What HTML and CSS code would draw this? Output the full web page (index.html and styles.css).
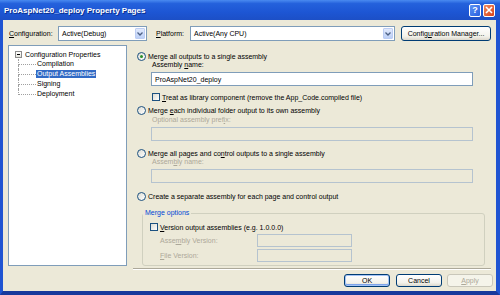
FILE: index.html
```html
<!DOCTYPE html>
<html lang="en">

<head>
  <meta charset="UTF-8">
  <title>ProAspNet20_deploy Property Pages</title>
  <link rel="stylesheet" href="styles.css">
</head>

<body>
  <div class="window">
    <div class="titlebar">
      <span class="title">ProAspNet20_deploy Property Pages</span>
      <div class="caption-btns">
        <span class="cap-btn help">?</span>
        <span class="cap-btn close">
          <svg width="8" height="8" viewBox="0 0 8 8">
            <path d="M1 1 L7 7 M7 1 L1 7" stroke="#fff" stroke-width="1.6" />
          </svg>
        </span>
      </div>
    </div>

    <div class="client">
      <div class="toprow">
        <label class="lbl-config"><u>C</u>onfiguration:</label>
        <div class="combo combo-config">
          <span class="combo-text">Active(Debug)</span>
          <span class="drop">
            <svg width="6" height="4" viewBox="0 0 6 4"><path d="M0.5 0.5 L3 3 L5.5 0.5" fill="none" stroke="#4d6185" stroke-width="1.3" /></svg>
          </span>
        </div>
        <label class="lbl-platform"><u>P</u>latform:</label>
        <div class="combo combo-platform">
          <span class="combo-text">Active(Any CPU)</span>
          <span class="drop">
            <svg width="6" height="4" viewBox="0 0 6 4"><path d="M0.5 0.5 L3 3 L5.5 0.5" fill="none" stroke="#4d6185" stroke-width="1.3" /></svg>
          </span>
        </div>
        <button class="btn btn-manager">Config<u>u</u>ration Manager...</button>
      </div>

      <div class="main">
        <div class="tree">
          <div class="tree-root">
            <span class="expander"></span>
            <span>Configuration Properties</span>
          </div>
          <div class="tree-child"><span class="twig"></span><span class="node">Compilation</span></div>
          <div class="tree-child"><span class="twig"></span><span class="node selected">Output Assemblies</span></div>
          <div class="tree-child"><span class="twig"></span><span class="node">Signing</span></div>
          <div class="tree-child last"><span class="twig"></span><span class="node">Deployment</span></div>
        </div>

        <div class="pane">
          <div class="opt opt1"><span class="radio checked"></span><span>Merge all outputs to a single assembly</span></div>
          <div class="field-label">Assembly <u>n</u>ame:</div>
          <div class="textbox">ProAspNet20_deploy</div>
          <div class="check-row"><span class="checkbox"></span><span><u>T</u>reat as library component (remove the App_Code.compiled file)</span></div>

          <div class="opt opt2"><span class="radio"></span><span>Merge <u>e</u>ach individual folder output to its own assembly</span></div>
          <div class="field-label disabled lbl2">Optional assembly pref<u>i</u>x:</div>
          <div class="textbox off"></div>

          <div class="opt opt3"><span class="radio"></span><span>Merge all pages and co<u>n</u>trol outputs to a single assembly</span></div>
          <div class="field-label disabled">Assem<u>b</u>ly name:</div>
          <div class="textbox off"></div>

          <div class="opt opt4"><span class="radio"></span><span>Create a separate assembly for each page and control output</span></div>

          <fieldset class="group">
            <legend>Merge options</legend>
            <div class="check-row group-check"><span class="checkbox"></span><span><u>V</u>ersion output assemblies (e.g. 1.0.0.0)</span></div>
            <div class="ver-row">
              <span class="ver-label">Asse<u>m</u>bly Version:</span>
              <span class="textbox off small"></span>
            </div>
            <div class="ver-row">
              <span class="ver-label"><u>F</u>ile Version:</span>
              <span class="textbox off small"></span>
            </div>
          </fieldset>
        </div>
      </div>

      <div class="separator"></div>
      <div class="buttons">
        <button class="btn default">OK</button>
        <button class="btn">Cancel</button>
        <button class="btn off"><u>A</u>pply</button>
      </div>
    </div>
  </div>
</body>

</html>
```

FILE: styles.css
```css
* {
  box-sizing: border-box;
}

body {
  margin: 0;
  font-family: "Liberation Sans", Arial, sans-serif;
  font-size: 7px;
  color: #000;
}

u {
  text-decoration: underline;
}

.window {
  width: 500px;
  height: 295px;
  display: flex;
  flex-direction: column;
  background: #ECE9D8;
  border-left: 3px solid #1f54d2;
  border-right: 4px solid #1f54d2;
  border-bottom: 4px solid #17399c;
}

.titlebar {
  height: 20px;
  margin: 0 -4px 0 -3px;
  padding: 0 5px 0 4px;
  display: flex;
  align-items: center;
  justify-content: space-between;
  background: linear-gradient(#4a8af0, #2461dc 18%, #1d56d4 60%, #1c4fc6 100%);
}

.title {
  color: #fff;
  font-weight: bold;
  font-size: 8px;
  text-shadow: 1px 1px 0 #0c2f8f;
}

.caption-btns {
  display: flex;
  gap: 2px;
}

.cap-btn {
  width: 12px;
  height: 13px;
  border: 1px solid #fff;
  border-radius: 2px;
  display: flex;
  align-items: center;
  justify-content: center;
  color: #fff;
  font-weight: bold;
  font-size: 9px;
}

.help {
  background: linear-gradient(135deg, #5c93f4, #2860e0);
}

.close {
  background: linear-gradient(135deg, #f08a60, #d8421a);
}

.client {
  flex: 1;
  display: flex;
  flex-direction: column;
  padding: 6px 5px 0 5px;
}

.toprow {
  height: 15px;
  display: flex;
  align-items: center;
}

.lbl-config {
  margin-left: 1px;
  width: 49px;
}

.lbl-platform {
  margin-left: 9px;
  width: 34px;
}

.combo {
  height: 15px;
  display: flex;
  align-items: center;
  background: #fff;
  border: 1px solid #7f9db9;
  padding: 1px;
}

.combo-config {
  width: 89px;
}

.combo-platform {
  width: 205px;
}

.combo-text {
  flex: 1;
  padding-left: 2px;
}

.drop {
  width: 10px;
  height: 11px;
  display: flex;
  align-items: center;
  justify-content: center;
  border: 1px solid #bccdf3;
  border-radius: 1px;
  background: linear-gradient(#e2eafc, #bcd0f7);
}

.btn {
  height: 15px;
  padding: 0;
  font-family: "Liberation Sans", Arial, sans-serif;
  font-size: 7px;
  color: #000;
  border: 1px solid #003c74;
  border-radius: 3px;
  background: linear-gradient(#ffffff, #f3f2ec 70%, #dcd8cc);
}

.btn-manager {
  margin-left: 6px;
  width: 90px;
}

.main {
  margin-top: 4px;
  height: 221px;
  display: flex;
}

.tree {
  width: 119px;
  background: #fff;
  border: 1px solid #7f9db9;
  padding-top: 3px;
}

.tree-root,
.tree-child {
  height: 10px;
  display: flex;
  align-items: center;
}

.tree-root {
  padding-left: 6px;
  gap: 3px;
}

.expander {
  width: 7px;
  height: 7px;
  border: 1px solid #8c8c8c;
  background: linear-gradient(#fff, #e4e4dc);
  display: flex;
  align-items: center;
  justify-content: center;
}

.expander::before {
  content: "";
  width: 3px;
  height: 1px;
  background: #000;
}

.tree-child {
  padding-left: 9px;
}

.twig {
  width: 18px;
  height: 10px;
  display: flex;
  flex-direction: column;
}

.twig::before {
  content: "";
  height: 5px;
  border-left: 1px dotted #a0a0a0;
  border-bottom: 1px dotted #a0a0a0;
}

.twig::after {
  content: "";
  flex: 1;
  border-left: 1px dotted #a0a0a0;
}

.tree-child.last .twig::after {
  border-left: none;
}

.node {
  padding: 0 1px;
  line-height: 8px;
}

.node.selected {
  background: #316ac5;
  color: #fff;
}

.pane {
  flex: 1;
  margin-left: 10px;
  display: flex;
  flex-direction: column;
}

.opt {
  height: 10px;
  display: flex;
  align-items: center;
  gap: 2px;
}

.opt1 {
  margin-top: 6px;
}

.opt2 {
  margin-top: 3px;
}

.opt3 {
  margin-top: 7px;
}

.opt4 {
  margin-top: 8px;
}

.radio {
  width: 9px;
  height: 9px;
  border-radius: 50%;
  border: 1px solid #1c5180;
  background: linear-gradient(135deg, #dcdcd4, #fff);
  display: flex;
  align-items: center;
  justify-content: center;
}

.radio.checked::before {
  content: "";
  width: 3px;
  height: 3px;
  border-radius: 50%;
  background: #2a8f2a;
}

.field-label {
  height: 8px;
  line-height: 8px;
  padding-left: 15px;
}

.lbl2 {
  margin-top: 1px;
}

.disabled,
.ver-label {
  color: #aca899;
}

.textbox {
  margin: 3px 0 0 14px;
  width: 322px;
  height: 14px;
  border: 1px solid #7f9db9;
  background: #fff;
  padding-left: 3px;
  display: flex;
  align-items: center;
}

.textbox.off {
  background: #ece9d8;
  border-color: #b5c3cf;
}

.check-row {
  margin-top: 6px;
  height: 10px;
  padding-left: 15px;
  display: flex;
  align-items: center;
  gap: 2px;
}

.checkbox {
  width: 8px;
  height: 8px;
  border: 1px solid #1c5180;
  background: linear-gradient(135deg, #dcdcd4, #fff);
}

.group {
  margin: 8px 0 0 5px;
  width: 343px;
  padding: 0 0 3px 0;
  border: 1px solid #d0d0bf;
  border-radius: 3px;
  min-inline-size: 0;
}

.group legend {
  padding: 0 2px;
  line-height: 8px;
  color: #0046d5;
}

.group-check {
  margin-top: 5px;
  padding-left: 7px;
}

.ver-row {
  margin-top: 2px;
  height: 13px;
  display: flex;
  align-items: center;
  padding-left: 17px;
}

.ver-label {
  width: 97px;
}

.textbox.small {
  margin: 0;
  width: 95px;
  height: 13px;
}

.separator {
  margin: 2px 0 0 125px;
  height: 2px;
  border-top: 1px solid #aca899;
  border-bottom: 1px solid #fff;
}

.buttons {
  margin: 4px -2px 0 0;
  display: flex;
  justify-content: flex-end;
  gap: 6px;
}

.buttons .btn {
  width: 46px;
  height: 13px;
}

.btn.default {
  box-shadow: inset 0 0 0 1px #a4c3f5, inset 0 -1px 0 1px #7ea4ea;
}

.btn.off {
  margin-left: -1px;
  color: #aca899;
  border-color: #c9c7ba;
  background: #f5f4ea;
}
```
